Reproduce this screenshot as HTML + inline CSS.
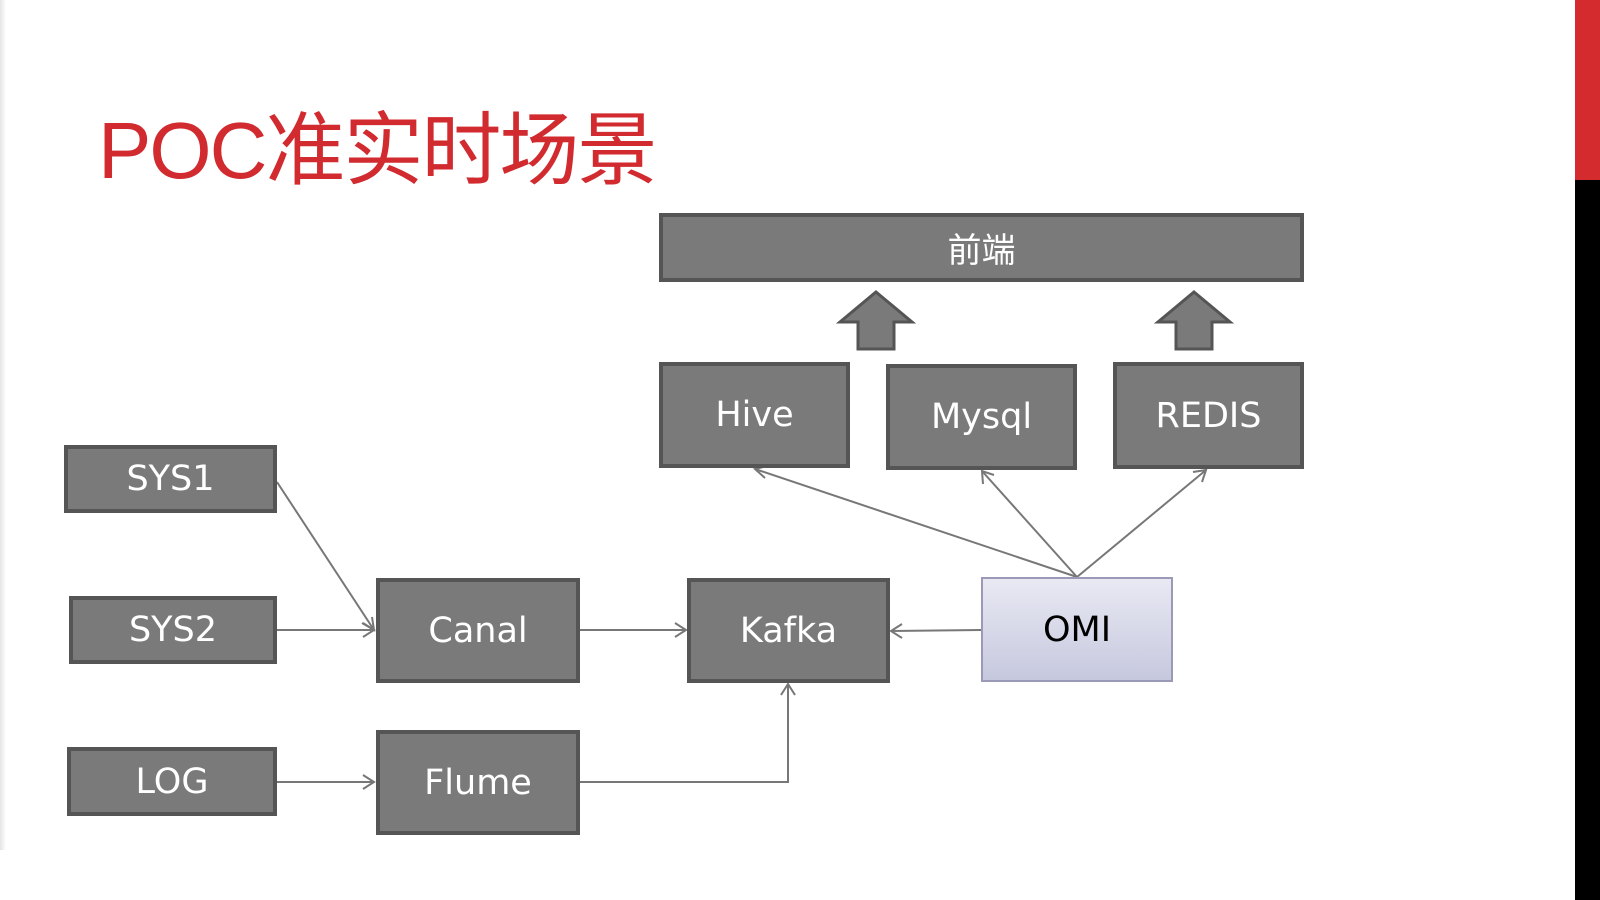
<!DOCTYPE html>
<html><head><meta charset="utf-8"><style>
html,body{margin:0;padding:0}
body{width:1600px;height:900px;background:#fff;position:relative;overflow:hidden;font-family:"DejaVu Sans","Liberation Sans","Noto Sans CJK SC",sans-serif}
.shadow{position:absolute;left:0;top:0;width:6px;height:850px;background:linear-gradient(to right,#e4e4e4,#fff)}
.title{position:absolute;left:98px;top:86px;font-family:"Liberation Sans","Noto Sans CJK SC",sans-serif;font-size:80px;color:#d12a2f;letter-spacing:-2px;white-space:nowrap}
.b{position:absolute;box-sizing:border-box;background:#7a7a7a;border:4px solid #555;color:#fff;display:flex;align-items:center;justify-content:center;font-size:35px}
.omi{background:linear-gradient(#e9e9f3,#c6c8de);border:2px solid #9a9ab8;color:#000}
</style></head><body>
<div class="shadow"></div>
<div style="position:absolute;left:1575px;top:0;width:25px;height:180px;background:#d42b2f"></div>
<div style="position:absolute;left:1575px;top:180px;width:25px;height:720px;background:#000"></div>
<div class="title">POC准实时场景</div>
<svg width="1600" height="900" style="position:absolute;left:0;top:0" fill="none" stroke="#777" stroke-width="2">
<line x1="1077" y1="577" x2="755" y2="469"/><polyline points="768,466 755,469 765,478"/>
<line x1="1077" y1="577" x2="982" y2="471"/><polyline points="983,484 982,471 994,475"/>
<line x1="1077" y1="577" x2="1206" y2="470"/><polyline points="1193,472 1206,470 1202,482"/>
<line x1="277" y1="482" x2="374" y2="630"/><polyline points="362,623 374,630 372,617"/>
<line x1="277" y1="630" x2="374" y2="630"/><polyline points="363,623 374,630 363,637"/>
<line x1="580" y1="630" x2="686" y2="630"/><polyline points="675,623 686,630 675,637"/>
<line x1="981" y1="630" x2="891" y2="631"/><polyline points="902,624 891,631 902,638"/>
<line x1="277" y1="782" x2="374" y2="782"/><polyline points="363,775 374,782 363,789"/>
<polyline points="580,782 788,782 788,684"/><polyline points="781,695 788,684 795,695"/>
<polygon points="876,292 912,322 894,322 894,349 858,349 858,322 840,322" fill="#7a7a7a" stroke="#555" stroke-width="3"/>
<polygon points="1194,292 1230,322 1212,322 1212,349 1176,349 1176,322 1158,322" fill="#7a7a7a" stroke="#555" stroke-width="3"/>
</svg>
<div class="b" style="left:659px;top:213px;width:645px;height:69px;font-size:34px;font-family:'Noto Sans CJK SC',sans-serif">前端</div>
<div class="b" style="left:659px;top:362px;width:191px;height:106px">Hive</div>
<div class="b" style="left:886px;top:364px;width:191px;height:106px">Mysql</div>
<div class="b" style="left:1113px;top:362px;width:191px;height:107px">REDIS</div>
<div class="b" style="left:64px;top:445px;width:213px;height:68px">SYS1</div>
<div class="b" style="left:69px;top:596px;width:208px;height:68px">SYS2</div>
<div class="b" style="left:67px;top:747px;width:210px;height:69px">LOG</div>
<div class="b" style="left:376px;top:578px;width:204px;height:105px">Canal</div>
<div class="b" style="left:376px;top:730px;width:204px;height:105px">Flume</div>
<div class="b" style="left:687px;top:578px;width:203px;height:105px">Kafka</div>
<div class="b omi" style="left:981px;top:577px;width:192px;height:105px">OMI</div>
</body></html>
